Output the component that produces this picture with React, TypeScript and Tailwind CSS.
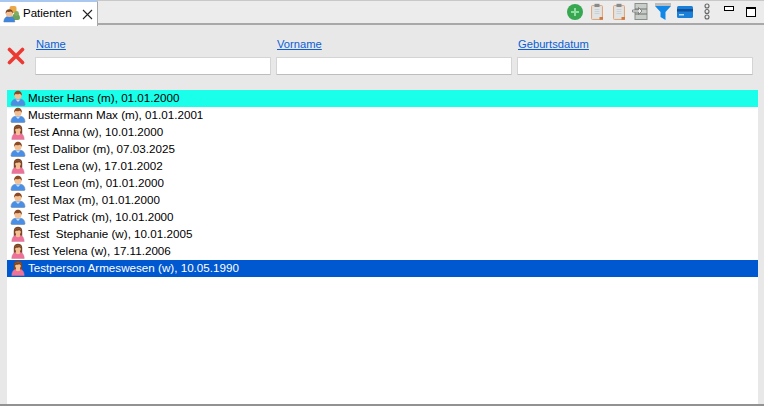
const PATIENTS: [string, "m" | "w", string][] = [
  ["Muster Hans (m), 01.01.2000", "m", "bg-[#19ffe9] text-black"],
  ["Mustermann Max (m), 01.01.2001", "m", "text-black"],
  ["Test Anna (w), 10.01.2000", "w", "text-black"],
  ["Test Dalibor (m), 07.03.2025", "m", "text-black"],
  ["Test Lena (w), 17.01.2002", "w", "text-black"],
  ["Test Leon (m), 01.01.2000", "m", "text-black"],
  ["Test Max (m), 01.01.2000", "m", "text-black"],
  ["Test Patrick (m), 10.01.2000", "m", "text-black"],
  ["Test  Stephanie (w), 10.01.2005", "w", "text-black"],
  ["Test Yelena (w), 17.11.2006", "w", "text-black"],
  ["Testperson Armeswesen (w), 10.05.1990", "w", "bg-[#0058d0] text-white"],
];

function Person({ g }: { g: "m" | "w" }) {
  return (
    <svg width="16" height="16" viewBox="0 0 16 16" className="shrink-0 -mt-px">
      {g === "m" ? (
        <>
          <path d="M1 14.500c0-3.200 2.300-5 4.200-5.300h5.600c1.900.3 4.200 2.100 4.200 5.300 0 .6-.5 1-1 1H2c-.5 0-1-.4-1-1z" fill="#4a8fe6" stroke="#6d86ad" strokeWidth="0.600" />
          <path d="M5.500 9.500h5L8 12z" fill="#fff" opacity="0.700" />
          <circle cx="8" cy="5.500" r="3.600" fill="#f2c094" />
          <path d="M4.200 5.800C3.800 2.600 5.800.8 8 .8s4.200 1.800 3.800 5c-.6-1-1.300-1.800-2-2.100-1.200.5-3.300.6-4.200.4-.6.400-1 1-1.400 1.700z" fill="#8a4b26" />
        </>
      ) : (
        <>
          <path d="M3.800 10.500V4.800C3.800 2.200 5.600.8 8 .8s4.200 1.400 4.200 4v5.700z" fill="#7c4526" />
          <path d="M1.800 15.500c0-3.500 1.600-5.800 4-6.300h4.400c2.400.5 4 2.800 4 6.300z" fill="#ef7099" stroke="#c97f97" strokeWidth="0.500" />
          <path d="M6 8h4v2.500c-1 1-3 1-4 0z" fill="#f2c094" />
          <circle cx="8" cy="5.500" r="2.900" fill="#f2c094" />
          <path d="M4.800 5.800C4.800 3.500 6 2.200 8 2.200s3.200 1.300 3.200 3.600c-.8-.9-1.400-1.400-2-1.600-1 .5-2.300.6-3 .6-.5.300-1 .7-1.400 1z" fill="#7c4526" />
        </>
      )}
    </svg>
  );
}

function TabIcon() {
  return (
    <svg width="18" height="18" viewBox="0 0 18 18" className="shrink-0">
      <rect x="6.500" y="1" width="7" height="7" rx="2" fill="#eaa947" />
      <path d="M9 13c0-3 2-5 4-5s4 2 4 5c0 1-1 2-2 2h-4z" fill="#6aa35a" />
      <circle cx="13.500" cy="8.500" r="2.400" fill="#7fae63" />
      <path d="M.8 17c0-3.800 2.300-5.800 5.500-5.800s5.500 2 5.500 5.800z" fill="#3f86e0" stroke="#5f7fae" strokeWidth="0.500" />
      <circle cx="6.300" cy="8.300" r="3.600" fill="#f2c094" />
      <path d="M2.600 8.500C2.400 5.600 4.200 4.200 6.300 4.200S10.200 5.600 10 8.500c-.6-1-1.300-1.700-2-2-1.200.5-2.700.5-3.600.3-.7.400-1.200 1-1.800 1.700z" fill="#7c4526" />
    </svg>
  );
}

function Clipboard() {
  return (
    <svg width="14" height="17" viewBox="0 0 14 17">
      <rect x="1.500" y="2.500" width="11" height="14" rx="1" fill="#ecdccd" stroke="#d9a884" />
      <rect x="3" y="4.500" width="8" height="10.500" fill="#dfe4e7" />
      <path d="M4.500 6.500h5M4.500 8.500h5M4.500 10.500h5" stroke="#c4ccd1" strokeWidth="0.800" />
      <rect x="4.500" y="0.800" width="5" height="3.200" fill="#858a8e" />
      <rect x="9.500" y="14" width="3.500" height="2.800" fill="#d27a3e" />
    </svg>
  );
}

function ColumnFilter({ label }: { label: string }) {
  return (
    <div className="flex flex-col items-start gap-[6px] w-[236px]">
      <a className="text-[11.200px] leading-[13px] text-[#0a5fd6] underline pl-px">{label}</a>
      <div className="h-[18px] w-full bg-white border border-[#d4d4d4] border-b-[#bdbdbd] rounded-[1px]" />
    </div>
  );
}

export default function App() {
  return (
    <div
      className="w-[764px] h-[406px] flex flex-col bg-[#e8e8e8] overflow-hidden"
      style={{ fontFamily: '"Liberation Sans", Arial, sans-serif' }}
    >
      <div className="h-[25px] shrink-0 flex items-stretch border-b-2 border-[#a8a8a8] bg-[#ececec] border-t border-t-[#c8c8c8]">
        <div className="relative z-10 w-[98px] h-[26px] -mt-px bg-white border-r border-[#a8a8a8] border-t-2 border-t-[#a9c8f0] flex items-center pl-[3px] gap-[2px] rounded-tr-[2px]">
          <TabIcon />
          <span className="text-[11.500px] text-black">Patienten</span>
          <svg width="11" height="11" viewBox="0 0 11 11" className="ml-[8px]">
            <path d="M1 1l9 9M10 1l-9 9" stroke="#222" strokeWidth="1.100" fill="none" />
          </svg>
        </div>
        <div className="flex-1 flex items-center justify-end pr-[8px] pb-[1px]">
          <svg width="16" height="16" viewBox="0 0 16 16">
            <circle cx="8" cy="8" r="8" fill="#37a851" />
            <path d="M8 4v8M4 8h8" stroke="#8fdca0" strokeWidth="2" />
          </svg>
          <div className="ml-[7px] flex"><Clipboard /></div>
          <div className="ml-[8px] flex"><Clipboard /></div>
          <svg width="16" height="17" viewBox="0 0 16 17" className="ml-[6px]">
            <rect x="3" y="0.500" width="12" height="16" fill="#c9cdc9" stroke="#8a8f8a" />
            <path d="M3 6h12M3 11h12" stroke="#6d726d" />
            <path d="M0.500 7h6V4.500L10 8l-3.500 3.500V9h-6z" fill="#eee" stroke="#666" strokeWidth="0.700" />
          </svg>
          <svg width="16" height="17" viewBox="0 0 16 17" className="ml-[7px]">
            <path d="M0 0h16v3l-5.500 6v8l-5-3V9L0 3z" fill="#1187e8" />
            <rect width="16" height="3" fill="#bcbcbc" />
          </svg>
          <svg width="16" height="12" viewBox="0 0 16 12" className="ml-[6px]">
            <rect width="16" height="12" rx="1.500" fill="#1a7fd8" />
            <rect y="3" width="16" height="2.500" fill="#124f96" />
            <rect x="2" y="8" width="5" height="1.500" fill="#b8dcf8" />
          </svg>
          <svg width="8" height="17" viewBox="0 0 8 17" className="ml-[10px]">
            <g fill="none" stroke="#666" strokeWidth="1.100">
              <circle cx="4" cy="3" r="2" />
              <circle cx="4" cy="8.500" r="2" />
              <circle cx="4" cy="14" r="2" />
            </g>
          </svg>
          <div className="ml-[13px] mb-[6px] w-[10px] h-[5px] border border-black bg-white" />
          <div className="ml-[12px] w-[10px] h-[10px] border border-black border-t-2 bg-white" />
        </div>
      </div>

      <div className="flex-1 min-h-0 flex flex-col pt-[13px]">
        <div className="h-[52px] shrink-0 flex items-start pl-[7px]">
          <svg width="18" height="18" viewBox="0 0 18 18" className="mt-[9px] mr-[10px] shrink-0">
            <path d="M2.500 2.500l13 13M15.500 2.500l-13 13" stroke="#ec3a32" strokeWidth="3.600" strokeLinecap="round" />
          </svg>
          <div className="flex gap-[5px]">
            <ColumnFilter label="Name" />
            <ColumnFilter label="Vorname" />
            <ColumnFilter label="Geburtsdatum" />
          </div>
        </div>
        <div className="flex-1 min-h-0 ml-[7px] mr-[6px] bg-white">
          {PATIENTS.map(([text, g, cls]) => (
            <div key={text} className={`h-[17px] flex items-center gap-[2px] pl-[3px] ${cls}`}>
              <Person g={g} />
              <span className="text-[11.650px] whitespace-pre leading-[15px] -mt-[2px]">{text}</span>
            </div>
          ))}
        </div>
        <div className="h-[2px] shrink-0 bg-[#929292]" />
      </div>
    </div>
  );
}
